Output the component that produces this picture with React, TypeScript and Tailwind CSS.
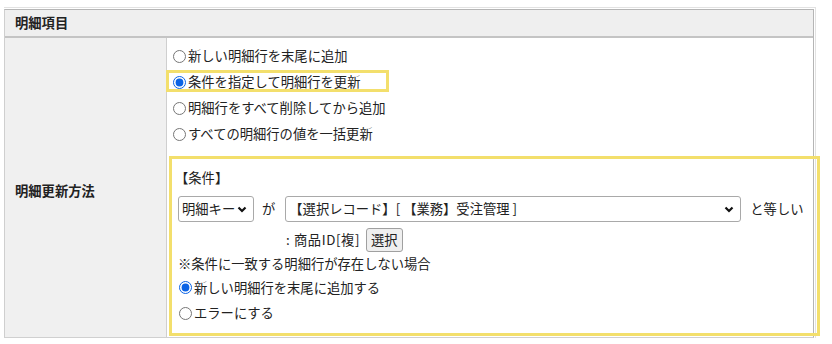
import { ReactNode } from 'react'

const font = { fontFamily: '"Noto Sans CJK JP", "Noto Sans", sans-serif' }

function Radio({ checked, label, className = '' }: { checked?: boolean; label: string; className?: string }) {
  return (
    <label className={`flex items-center ${className}`}>
      <input type="radio" defaultChecked={checked} className="m-0 mr-[2px] w-[13px] h-[13px] accent-[#0b63e5]" />
      <span>{label}</span>
    </label>
  )
}

function FakeSelect({ width, children }: { width: string; children: ReactNode }) {
  return (
    <div className={`${width} h-[26px] flex items-center justify-between border border-[#a9a9a9] rounded-[3px] bg-white pl-[3px] pr-[6px]`}>
      <span className="whitespace-pre">{children}</span>
      <svg width="10" height="7" viewBox="0 0 10 7">
        <path d="M1.5 1.5 L5 5 L8.5 1.5" fill="none" stroke="#111" strokeWidth="2.2" />
      </svg>
    </div>
  )
}

export default function App() {
  return (
    <div className="w-[832px] h-[344px] bg-white text-[13.3px] text-[#222] pt-[7px] pl-[4px]" style={font}>
      <div className="w-[812px] border-t border-r border-[#e2e2e2] pt-[1px] pr-[1px]">
        <div className="border-t border-r border-l border-b border-[#b5b5b5] border-l-[#cfcfcf] border-b-[#d0d0d0]">
          {/* header */}
          <div className="h-[28px] bg-[#efefef] border-b-2 border-[#c4c4c4] flex items-center pl-[10px] font-bold">
            明細項目
          </div>

          {/* body row */}
          <div className="flex h-[299px]">
            <div className="w-[162px] bg-[#f0f0f0] border-r border-[#cfcfcf] flex items-center pl-[10px] pt-[7px] font-bold">
              明細更新方法
            </div>
            <div className="flex-1 relative pt-[5px]">
              <div className="absolute left-[-1px] top-[32px] w-[223px] h-[22px] border-[3px] border-[#f3df6c]" />
              <div className="pl-[6px]">
                <Radio label="新しい明細行を末尾に追加" className="h-[26px]" />
                <Radio checked label="条件を指定して明細行を更新" className="h-[26px]" />
                <Radio label="明細行をすべて削除してから追加" className="h-[26px]" />
                <Radio label="すべての明細行の値を一括更新" className="h-[26px]" />
              </div>

              {/* condition section */}
              <div className="relative mt-[12px] pl-[11px] pt-[6px]">
                <div className="absolute left-[2px] top-[-3px] w-[651px] h-[180px] border-[3px] border-[#f3df6c] pointer-events-none" />
                <div className="h-[26px] flex items-center -ml-[3px]">【条件】</div>
                <div className="mt-[5px] flex items-center">
                  <FakeSelect width="w-[76px]">明細キー</FakeSelect>
                  <span className="ml-[8px] mr-[10px]">が</span>
                  <FakeSelect width="w-[456px]">{'【選択レコード】[ 【業務】受注管理 ]'}</FakeSelect>
                  <span className="ml-[9px]">と等しい</span>
                </div>
                <div className="mt-[6px] h-[24px] flex items-center pl-[108px]">
                  <span className="tracking-[0.6px]">: 商品ID[複]</span>
                  <button className="ml-[6px] h-[24px] px-[4px] bg-[#efefef] border border-[#a0a0a0] rounded-[3px]">選択</button>
                </div>
                <div className="h-[24px] flex items-center">※条件に一致する明細行が存在しない場合</div>
                <div className="pl-[1px]">
                  <Radio checked label="新しい明細行を末尾に追加する" className="h-[23px]" />
                  <Radio label="エラーにする" className="h-[26px] mt-[1px]" />
                </div>
              </div>
            </div>
          </div>
        </div>
      </div>
    </div>
  )
}
